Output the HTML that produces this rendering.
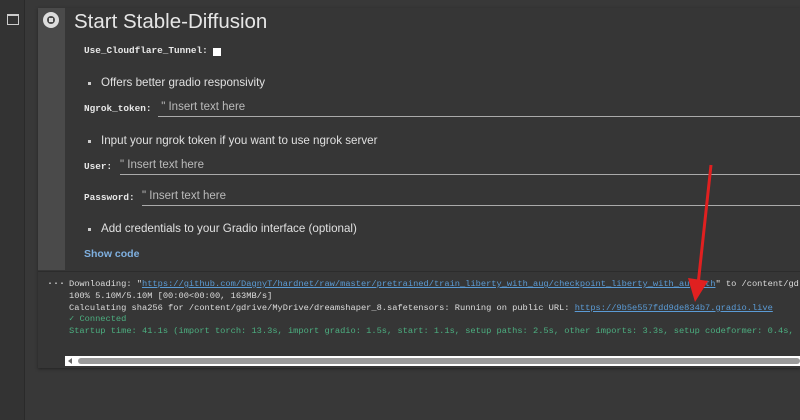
<!DOCTYPE html>
<html><head><style>
body{margin:0;width:800px;height:420px;background:#383838;position:relative;overflow:hidden;font-family:"Liberation Sans",sans-serif;color:#e0e0e0}
.a{position:absolute}
.mono{font-family:"Liberation Mono",monospace}
.lbl{font-family:"Liberation Mono",monospace;font-weight:bold;font-size:9.4px;color:#e8e8e8}
.in{color:#bbb;font-size:11.5px;border-bottom:1px solid #aaa;height:15px}
.bul{font-size:11.6px;color:#e0e0e0}
.bul:before{content:"";position:absolute;left:-13px;top:6px;width:3px;height:3px;background:#ccc}
.out{font-family:"Liberation Mono",monospace;font-size:8.7px;white-space:pre;line-height:11.8px}
a{color:#5b9bd5;text-decoration:underline}
</style></head><body>
<div class="a" style="left:0;top:0;width:24px;height:420px;background:#333"></div>
<div class="a" style="left:24px;top:0;width:1px;height:420px;background:#2a2a2a"></div>
<div class="a" style="left:7px;top:14px;width:10px;height:8px;border:1px solid #ccc;border-top-width:2px"></div>
<div class="a" style="left:38px;top:8px;width:762px;height:360px;background:#363636;box-shadow:0 1px 3px #222;overflow:hidden">
<div class="a" style="left:0;top:0;width:27px;height:262px;background:#4a4a4a"></div>
<div class="a" style="left:5px;top:4px;width:16px;height:16px;border-radius:50%;background:#ddd"></div>
<div class="a" style="left:9px;top:8px;width:8px;height:8px;border-radius:50%;background:#4a4a4a"></div>
<div class="a" style="left:11px;top:10px;width:4px;height:4px;background:#ddd"></div>
<div class="a" style="left:36px;top:2px;font-size:20.5px;color:#e6e6e6">Start Stable-Diffusion</div>
<div class="a lbl" style="left:46px;top:37px">Use_Cloudflare_Tunnel:</div>
<div class="a" style="left:175px;top:40px;width:8px;height:8px;background:#fff"></div>
<div class="a bul" style="left:63px;top:68px">Offers better gradio responsivity</div>
<div class="a lbl" style="left:46px;top:95px">Ngrok_token:</div>
<div class="a in" style="left:120px;top:93px;width:642px">&nbsp;" Insert text here</div>
<div class="a bul" style="left:63px;top:126px">Input your ngrok token if you want to use ngrok server</div>
<div class="a lbl" style="left:46px;top:153px">User:</div>
<div class="a in" style="left:82px;top:151px;width:680px">" Insert text here</div>
<div class="a lbl" style="left:46px;top:184px">Password:</div>
<div class="a in" style="left:104px;top:182px;width:658px">" Insert text here</div>
<div class="a bul" style="left:63px;top:214px">Add credentials to your Gradio interface (optional)</div>
<div class="a" style="left:46px;top:240px;font-size:10.5px;font-weight:bold;color:#7fb0e0">Show code</div>
<div class="a" style="left:0;top:263px;width:762px;height:1px;background:#2c2c2c"></div>
<div class="a mono" style="left:9px;top:269px;font-size:10px;color:#ccc;font-weight:bold">...</div>
<div class="a out" style="left:31px;top:271px;color:#ddd">Downloading: "<a>https://github.com/DagnyT/hardnet/raw/master/pretrained/train_liberty_with_aug/checkpoint_liberty_with_aug.pth</a>" to /content/gdrive
100% 5.10M/5.10M [00:00&lt;00:00, 163MB/s]
Calculating sha256 for /content/gdrive/MyDrive/dreamshaper_8.safetensors: Running on public URL: <a>https://9b5e557fdd9de834b7.gradio.live</a>
<span style="color:#4caf80">✓ Connected</span>
<span style="color:#4caf80">Startup time: 41.1s (import torch: 13.3s, import gradio: 1.5s, start: 1.1s, setup paths: 2.5s, other imports: 3.3s, setup codeformer: 0.4s,</span></div>
<div class="a" style="left:27px;top:348px;width:735px;height:10px;background:#fff"></div>
<div class="a" style="left:40px;top:350px;width:722px;height:6px;background:#9a9a9a;border-radius:3px"></div>
<div class="a" style="left:30px;top:350px;width:0;height:0;border-top:3px solid transparent;border-bottom:3px solid transparent;border-right:4px solid #666"></div>
</div>
<svg class="a" style="left:680px;top:160px" width="50" height="150"><line x1="31" y1="5" x2="18" y2="125" stroke="#e02020" stroke-width="3"/><polygon points="8,118 28,121 15,142" fill="#e02020"/></svg>
</body></html>
